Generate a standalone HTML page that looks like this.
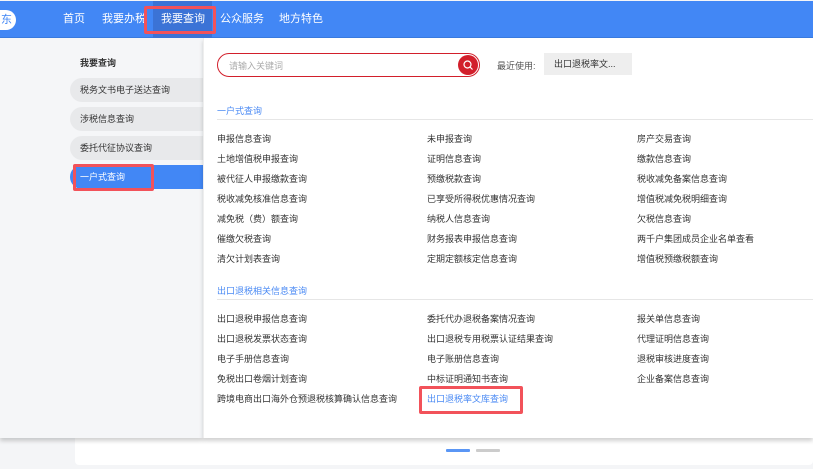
<!DOCTYPE html>
<html><head><meta charset="utf-8"><style>
*{margin:0;padding:0;box-sizing:border-box}
body{width:813px;height:469px;overflow:hidden;background:#f4f5f7;font-family:"Liberation Sans","Noto Sans CJK SC",sans-serif;position:relative}
.top{position:absolute;left:0;top:1px;width:813px;height:37px;background:#4287f5;border-bottom:1px solid #3a7be0}
.logo{position:absolute;left:-12px;top:9px;width:28px;height:20px;background:#fff;border-radius:10px;font-size:11px;color:#4287f5;line-height:20px;text-align:right;padding-right:4px}
.nav{position:absolute;top:0;height:37px;line-height:37px;color:#fff;font-size:11px}
.act{background:#3b73d6}
.rbox{position:absolute;border:3px solid #f2525a;border-radius:2px}
.side{position:absolute;left:0;top:38px;width:203px;height:400px;background:#f5f6f8;box-shadow:0 3px 4px rgba(0,0,0,.18)}
.panel{position:absolute;left:203px;top:38px;width:610px;height:400px;background:#fff;border-left:1px solid #eee;box-shadow:0 3px 4px rgba(0,0,0,.18)}
.t{position:absolute;font-size:9px;color:#333;white-space:nowrap}
.pill{position:absolute;left:70px;width:133px;height:24px;border-radius:12px 0 0 12px;background:#e8e9eb;font-size:9px;line-height:24px;padding-left:10px;color:#333}
.b{color:#4a8af4}
.card{position:absolute;left:75px;top:438px;width:738px;height:27px;background:#fff;border-radius:0 0 4px 4px}
</style></head><body>
<div class="top">
<div class="logo">东</div>
<div class="nav" style="left:63px">首页</div>
<div class="nav" style="left:102px">我要办税</div>
<div class="nav act" style="left:153px;width:59px;padding-left:8px">我要查询</div>
<div class="nav" style="left:220px">公众服务</div>
<div class="nav" style="left:279px">地方特色</div>
</div>
<div class="rbox" style="left:144px;top:6px;width:72px;height:28px"></div>
<div class="card"><div style="position:absolute;left:371px;top:11px;width:24px;height:3px;background:#5a96f5;border-radius:1px"></div><div style="position:absolute;left:401px;top:11px;width:24px;height:3px;background:#ccc;border-radius:1px"></div></div>
<div class="side">
<div class="t" style="left:80px;top:18px;font-weight:bold">我要查询</div>
<div class="pill" style="top:40px">税务文书电子送达查询</div>
<div class="pill" style="top:69px">涉税信息查询</div>
<div class="pill" style="top:98px">委托代征协议查询</div>
<div class="pill" style="top:127px;background:#4287f5;color:#fff">一户式查询</div>
</div>
<div class="rbox" style="left:73px;top:164px;width:81px;height:27px"></div>
<div class="panel">
<div style="position:absolute;left:13px;top:15px;width:263px;height:24px;border:1px solid #d21f2b;border-radius:12px"></div>
<div class="t" style="left:25px;top:21px;color:#aaa">请输入关键词</div>
<div style="position:absolute;left:254px;top:17px;width:20px;height:20px;border-radius:50%;background:#d21f2b"><svg width="20" height="20"><circle cx="9.5" cy="9.5" r="3.5" fill="none" stroke="#fff" stroke-width="1.2"/><path d="M12 12l2.5 2.5" stroke="#fff" stroke-width="1.2"/></svg></div>
<div class="t" style="left:293px;top:21px;color:#555">最近使用:</div>
<div style="position:absolute;left:340px;top:15px;width:88px;height:22px;background:#eee;font-size:9px;line-height:22px;padding-left:10px;color:#333">出口退税率文...</div>
<div class="t b" style="left:13px;top:66px">一户式查询</div>
<div style="position:absolute;left:13px;top:81px;width:597px;height:1px;background:#e6e6e6"></div>
<div class="t" style="left:13px;top:94px">申报信息查询</div><div class="t" style="left:223px;top:94px">未申报查询</div><div class="t" style="left:433px;top:94px">房产交易查询</div>
<div class="t" style="left:13px;top:114px">土地增值税申报查询</div><div class="t" style="left:223px;top:114px">证明信息查询</div><div class="t" style="left:433px;top:114px">缴款信息查询</div>
<div class="t" style="left:13px;top:134px">被代征人申报缴款查询</div><div class="t" style="left:223px;top:134px">预缴税款查询</div><div class="t" style="left:433px;top:134px">税收减免备案信息查询</div>
<div class="t" style="left:13px;top:154px">税收减免核准信息查询</div><div class="t" style="left:223px;top:154px">已享受所得税优惠情况查询</div><div class="t" style="left:433px;top:154px">增值税减免税明细查询</div>
<div class="t" style="left:13px;top:174px">减免税（费）额查询</div><div class="t" style="left:223px;top:174px">纳税人信息查询</div><div class="t" style="left:433px;top:174px">欠税信息查询</div>
<div class="t" style="left:13px;top:194px">催缴欠税查询</div><div class="t" style="left:223px;top:194px">财务报表申报信息查询</div><div class="t" style="left:433px;top:194px">两千户集团成员企业名单查看</div>
<div class="t" style="left:13px;top:214px">清欠计划表查询</div><div class="t" style="left:223px;top:214px">定期定额核定信息查询</div><div class="t" style="left:433px;top:214px">增值税预缴税额查询</div>
<div class="t b" style="left:13px;top:246px">出口退税相关信息查询</div>
<div style="position:absolute;left:13px;top:261px;width:597px;height:1px;background:#e6e6e6"></div>
<div class="t" style="left:13px;top:274px">出口退税申报信息查询</div><div class="t" style="left:223px;top:274px">委托代办退税备案情况查询</div><div class="t" style="left:433px;top:274px">报关单信息查询</div>
<div class="t" style="left:13px;top:294px">出口退税发票状态查询</div><div class="t" style="left:223px;top:294px">出口退税专用税票认证结果查询</div><div class="t" style="left:433px;top:294px">代理证明信息查询</div>
<div class="t" style="left:13px;top:314px">电子手册信息查询</div><div class="t" style="left:223px;top:314px">电子账册信息查询</div><div class="t" style="left:433px;top:314px">退税审核进度查询</div>
<div class="t" style="left:13px;top:334px">免税出口卷烟计划查询</div><div class="t" style="left:223px;top:334px">中标证明通知书查询</div><div class="t" style="left:433px;top:334px">企业备案信息查询</div>
<div class="t" style="left:13px;top:354px">跨境电商出口海外仓预退税核算确认信息查询</div><div class="t b" style="left:223px;top:354px">出口退税率文库查询</div>
</div>
<div class="rbox" style="left:419px;top:386px;width:104px;height:28px"></div>
</body></html>
